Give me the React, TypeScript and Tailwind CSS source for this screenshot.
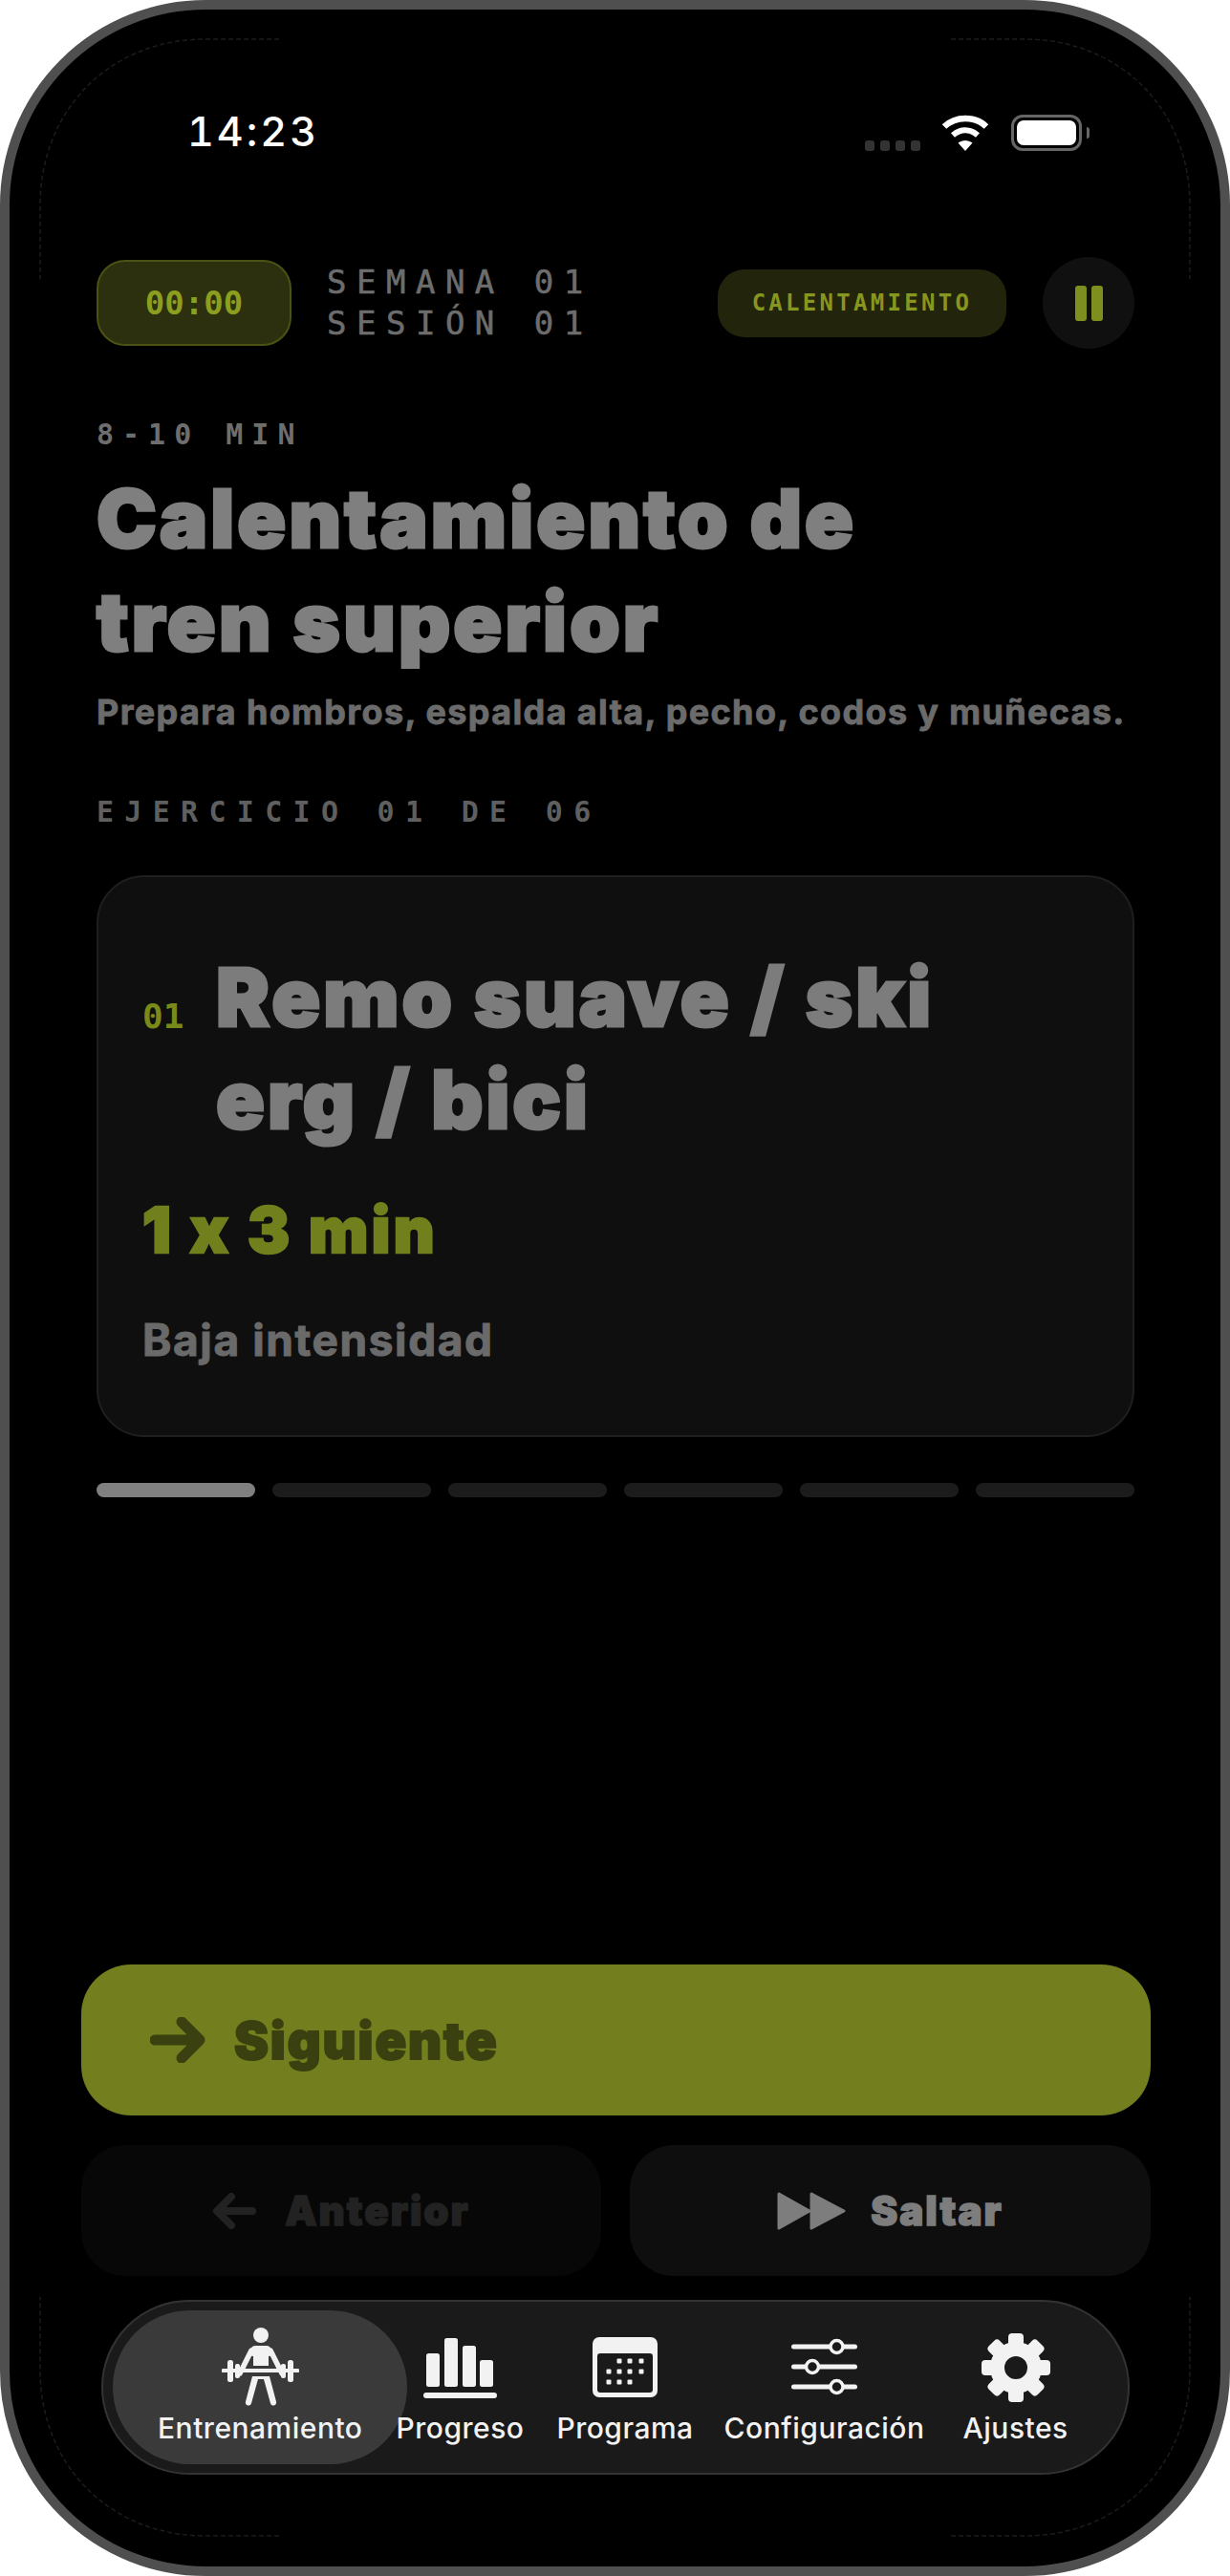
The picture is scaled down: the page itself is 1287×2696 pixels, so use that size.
import React from "react";

const mono = "font-['DejaVu_Sans_Mono','Liberation_Mono',monospace]";

function Wifi() {
  return (
    <svg width="50" height="38" viewBox="0 0 50 38" fill="none" className="block">
      <path d="M3 12.5C15 1 35 1 47 12.5" stroke="#fff" strokeWidth="6.5" />
      <path d="M12 21.5C20 14.5 30 14.5 38 21.5" stroke="#fff" strokeWidth="6" />
      <path d="M17.5 29.5C22 26 28 26 32.5 29.5L25 38Z" fill="#fff" />
    </svg>
  );
}

function Battery() {
  return (
    <div className="flex items-center gap-[5px]">
      <div className="w-[74px] h-[38px] rounded-[12px] border-[3px] border-[#666] p-[3px]">
        <div className="w-full h-full rounded-[7px] bg-white" />
      </div>
      <div className="w-[3px] h-[12px] rounded-r-[3px] bg-[#666]" />
    </div>
  );
}

function PersonIcon() {
  return (
    <svg width="81" height="82" viewBox="0 0 81 82" fill="none" className="block">
      <circle cx="41" cy="8" r="8" fill="#f2f2f2" />
      <path d="M35 19H47C49 19 50.5 20 51.5 22L55 29L49 30V40H33V30L27 29L30.5 22C31.5 20 33 19 35 19Z" fill="#f2f2f2" />
      <path d="M31 24L19 48M51 24L63 48" stroke="#f2f2f2" strokeWidth="5.5" strokeLinecap="round" />
      <path d="M1.5 45H79.5" stroke="#f2f2f2" strokeWidth="4" strokeLinecap="round" />
      <rect x="6" y="34" width="6" height="23" rx="2.5" fill="#f2f2f2" />
      <rect x="14" y="38" width="5" height="15" rx="2" fill="#f2f2f2" />
      <rect x="69" y="34" width="6" height="23" rx="2.5" fill="#f2f2f2" />
      <rect x="62" y="38" width="5" height="15" rx="2" fill="#f2f2f2" />
      <path d="M32 51H50L57 77.5C57.6 80 55.8 81.5 54 81.5C52.6 81.5 51.5 80.7 51 79.2L44 54H38L31 79.2C30.5 80.7 29.4 81.5 28 81.5C26.2 81.5 24.4 80 25 77.5Z" fill="#f2f2f2" />
    </svg>
  );
}

function BarsIcon() {
  return (
    <svg width="77" height="63" viewBox="0 0 77 63" fill="#f2f2f2" className="block">
      <rect x="3" y="16" width="14" height="35" rx="2.5" />
      <rect x="22" y="0" width="14" height="51" rx="2.5" />
      <rect x="41" y="8" width="14" height="43" rx="2.5" />
      <rect x="59" y="23" width="14" height="28" rx="2.5" />
      <rect x="0" y="57" width="77" height="6" rx="3" />
    </svg>
  );
}

function CalendarIcon() {
  const dots = [
    [28, 25], [39, 25], [51, 25],
    [17, 36], [28, 36], [39, 36], [51, 36],
    [17, 47], [28, 47], [39, 47],
  ];
  return (
    <svg width="68" height="63" viewBox="0 0 68 63" className="block">
      <rect width="68" height="63" rx="7" fill="#f2f2f2" />
      <rect x="5" y="17" width="58" height="41" rx="3" fill="#1a1a1a" />
      {dots.map(([x, y]) => (
        <rect key={`${x}-${y}`} x={x - 2.5} y={y - 2.5} width="5" height="5" rx="1" fill="#f2f2f2" />
      ))}
    </svg>
  );
}

function SlidersIcon() {
  return (
    <svg width="69" height="62" viewBox="0 0 69 62" fill="none" className="block">
      {[
        [10, 47.5],
        [31, 22],
        [52, 47.5],
      ].map(([y, x]) => (
        <g key={y}>
          <path d={`M2.5 ${y}H66.5`} stroke="#f2f2f2" strokeWidth="5" strokeLinecap="round" />
          <circle cx={x} cy={y} r="6.5" fill="#1a1a1a" stroke="#f2f2f2" strokeWidth="3.5" />
        </g>
      ))}
    </svg>
  );
}

function GearIcon() {
  const angles = [0, 45, 90, 135, 180, 225, 270, 315];
  return (
    <svg width="72" height="72" viewBox="0 0 72 72" fill="none" className="block">
      {angles.map((a) => (
        <rect key={a} x="28" y="0" width="16" height="20" rx="4" fill="#f2f2f2" transform={`rotate(${a} 36 36)`} />
      ))}
      <circle cx="36" cy="36" r="19.5" stroke="#f2f2f2" strokeWidth="15" />
    </svg>
  );
}

function NavItem({ icon, label, className, iconClass }: { icon: React.ReactNode; label: string; className?: string; iconClass: string }) {
  return (
    <div className={`relative flex flex-col items-center ${className ?? ""}`}>
      <div className={`h-[82px] flex justify-center ${iconClass}`}>{icon}</div>
      <span className="mt-[6px] text-[30px] leading-[36px] font-medium tracking-[0.5px] text-[#f2f2f2] whitespace-nowrap">{label}</span>
    </div>
  );
}

export default function App() {
  return (
    <div className="w-[1287px] h-[2696px] bg-white font-['Inter',sans-serif] [font-optical-sizing:none] [font-variant-ligatures:no-contextual]">
      <div className="relative w-full h-full rounded-[215px] border-[10px] border-[#4f4f4f] bg-black overflow-hidden flex flex-col">
        <svg className="absolute left-[-10px] top-[-10px] pointer-events-none" width="1287" height="2696" fill="none" stroke="#1c1c1c" strokeWidth="1.5" strokeDasharray="5 3">
          <path d="M292 41H215C115 41 42 115 42 215V292" />
          <path d="M995 41H1072C1172 41 1245 115 1245 215V292" />
          <path d="M292 2654H215C115 2654 42 2580 42 2480V2404" />
          <path d="M995 2654H1072C1172 2654 1245 2580 1245 2480V2404" />
        </svg>

        {/* status bar */}
        <div className="relative flex items-center justify-between h-[38px] mt-[110px] ml-[186px] mr-[137px]">
          <span className="mb-[4px] text-[43px] leading-[34px] font-medium tracking-[3px] tabular-nums text-white">14:23</span>
          <div className="flex items-center">
            <div className="flex gap-[6px] self-end mr-[22px] pt-[27px]">
              <div className="w-[10px] h-[11px] rounded-[3px] bg-[#333]" />
              <div className="w-[10px] h-[11px] rounded-[3px] bg-[#333]" />
              <div className="w-[10px] h-[11px] rounded-[3px] bg-[#333]" />
              <div className="w-[10px] h-[11px] rounded-[3px] bg-[#333]" />
            </div>
            <Wifi />
            <div className="ml-[23px]">
              <Battery />
            </div>
          </div>
        </div>

        <div className="relative flex flex-col pl-[91px] pr-[90px]">
          {/* header */}
          <div className="flex items-center h-[96px] mt-[111px]">
            <div className={`w-[204px] h-[90px] rounded-[30px] border-2 border-[#4b5213] bg-[#2d300e] flex items-center justify-center text-[34px] font-bold text-[#8c9e1f] ${mono}`}>
              00:00
            </div>
            <div className={`ml-[37px] text-[34px] leading-[43px] tracking-[10.5px] [-webkit-text-stroke:0.6px_currentColor] text-[#6d6d6d] whitespace-nowrap ${mono}`}>
              <div>SEMANA 01</div>
              <div>SESIÓN 01</div>
            </div>
            <div className="flex-1" />
            <div className={`w-[302px] h-[71px] rounded-[28px] bg-[#22240b] flex items-center justify-center text-[24px] font-bold tracking-[3.3px] text-[#86961f] ${mono}`}>
              CALENTAMIENTO
            </div>
            <div className="ml-[38px] w-[96px] h-[96px] rounded-full bg-[#101010] flex items-center justify-center gap-[5px]">
              <div className="w-[12px] h-[37px] rounded-[3px] bg-[#7f8f1f]" />
              <div className="w-[12px] h-[37px] rounded-[3px] bg-[#7f8f1f]" />
            </div>
          </div>

          <div className={`mt-[75px] text-[30px] leading-[30px] font-bold tracking-[9px] text-[#6e6e6e] ${mono}`}>8-10 MIN</div>
          <h1 className="mt-[19px] text-[84px] leading-[108px] font-black tracking-[3.2px] [-webkit-text-stroke:3px_currentColor] text-[#7f7f7f]">
            Calentamiento de
            <br />
            tren superior
          </h1>
          <p className="mt-[17px] text-[36px] leading-[46px] font-bold tracking-[1.35px] [-webkit-text-stroke:0.8px_currentColor] text-[#6b6b6b] whitespace-nowrap">
            Prepara hombros, espalda alta, pecho, codos y muñecas.
          </p>
          <div className={`mt-[67px] text-[30px] leading-[30px] font-bold tracking-[11.3px] text-[#5f5f5f] ${mono}`}>EJERCICIO 01 DE 06</div>

          {/* card */}
          <div className="mt-[51px] h-[588px] rounded-[50px] border-2 border-[#1f1f1f] bg-[#0f0f0f] pl-[46px] pr-[40px] pt-[72px]">
            <div className="flex items-start">
              <span className={`w-[77px] shrink-0 mt-[54px] text-[36px] leading-[40px] font-bold text-[#7a8a1a] ${mono}`}>01</span>
              <h2 className="text-[84px] leading-[107px] font-black tracking-[3px] [-webkit-text-stroke:3px_currentColor] text-[#7c7c7c]">
                Remo suave / ski
                <br />
                erg / bici
              </h2>
            </div>
            <div className="mt-[48px] text-[66px] leading-[70px] font-black tracking-[3.4px] [-webkit-text-stroke:2.5px_currentColor] text-[#71801c]">1 x 3 min</div>
            <div className="mt-[52px] text-[46px] leading-[56px] font-bold tracking-[1.6px] [-webkit-text-stroke:1px_currentColor] text-[#6a6a6a]">Baja intensidad</div>
          </div>

          {/* progress */}
          <div className="mt-[48px] flex gap-[18px]">
            <div className="flex-1 h-[15px] rounded-full bg-[#808080]" />
            <div className="flex-1 h-[15px] rounded-full bg-[#1c1c1c]" />
            <div className="flex-1 h-[15px] rounded-full bg-[#1c1c1c]" />
            <div className="flex-1 h-[15px] rounded-full bg-[#1c1c1c]" />
            <div className="flex-1 h-[15px] rounded-full bg-[#1c1c1c]" />
            <div className="flex-1 h-[15px] rounded-full bg-[#1c1c1c]" />
          </div>
        </div>

        {/* actions */}
        <div className="relative mt-auto pb-[96px] pl-[75px] pr-[73px] flex flex-col">
          <div className="h-[158px] rounded-[52px] bg-[#737e1e] flex items-center pl-[72px] text-[54px] font-black tracking-[1.9px] [-webkit-text-stroke:2px_currentColor] text-[#3a400f]">
            <svg width="58" height="48" viewBox="0 0 58 48" fill="none" stroke="#3a400f" strokeWidth="11" strokeLinecap="round" strokeLinejoin="round">
              <path d="M5 24H50M33 5L52 24L33 43" />
            </svg>
            <span className="ml-[30px]">Siguiente</span>
          </div>
          <div className="mt-[31px] flex gap-[30px]">
            <div className="w-[544px] h-[137px] rounded-[46px] bg-[#070707] flex items-center justify-center text-[42px] font-black tracking-[2px] [-webkit-text-stroke:1.5px_currentColor] text-[#222]">
              <svg width="46" height="38" viewBox="0 0 46 38" fill="none" stroke="#222" strokeWidth="8" strokeLinecap="round" strokeLinejoin="round">
                <path d="M42 19H6M20 4L5 19L20 34" />
              </svg>
              <span className="ml-[30px]">Anterior</span>
            </div>
            <div className="w-[545px] h-[137px] rounded-[46px] bg-[#0e0e0e] flex items-center justify-center text-[42px] font-black tracking-[2px] [-webkit-text-stroke:1.5px_currentColor] text-[#7d7d7d]">
              <svg width="72" height="40" viewBox="0 0 72 40" fill="#7d7d7d" stroke="#7d7d7d" strokeWidth="3" strokeLinejoin="round">
                <path d="M2 2L34 20L2 38Z" />
                <path d="M36 2L70 20L36 38Z" />
              </svg>
              <span className="ml-[26px]">Saltar</span>
            </div>
          </div>

          {/* nav */}
          <div className="relative mt-[25px] ml-[21px] w-[1076px] h-[183px] rounded-full border-2 border-[#333] bg-[#1a1a1a] flex items-start pt-[26px] pl-[57px]">
            <div className="absolute left-[10px] top-[9px] w-[308px] h-[161px] rounded-full bg-[#3a3a3a]" />
            <NavItem iconClass="pt-[1px]" icon={<PersonIcon />} label="Entrenamiento" />
            <NavItem className="ml-[35px]" iconClass="pt-[12px]" icon={<BarsIcon />} label="Progreso" />
            <NavItem className="ml-[34px]" iconClass="pt-[11px]" icon={<CalendarIcon />} label="Programa" />
            <NavItem className="ml-[32px]" iconClass="pt-[11px]" icon={<SlidersIcon />} label="Configuración" />
            <NavItem className="ml-[40px]" iconClass="pt-[7px]" icon={<GearIcon />} label="Ajustes" />
          </div>
        </div>
      </div>
    </div>
  );
}
